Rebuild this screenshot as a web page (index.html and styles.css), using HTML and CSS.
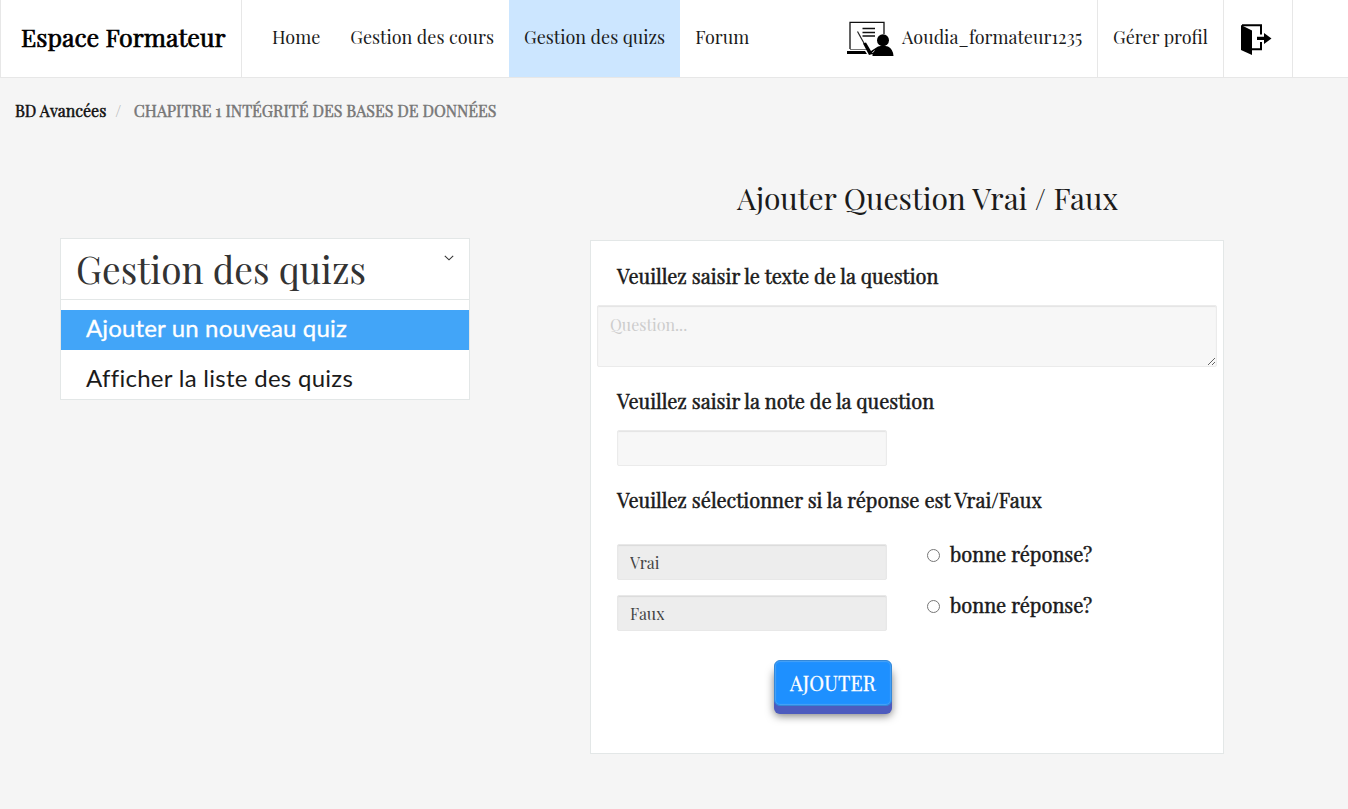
FILE: index.html
```html
<!DOCTYPE html>
<html lang="fr">
<head>
<meta charset="utf-8">
<title>Espace Formateur</title>
<link rel="stylesheet" href="styles.css">
</head>
<body>
<header class="navbar">
  <a class="brand">Espace Formateur</a>
  <nav class="links">
    <a class="link">Home</a>
    <a class="link">Gestion des cours</a>
    <a class="link active">Gestion des quizs</a>
    <a class="link">Forum</a>
  </nav>
  <div class="account">
    <a class="user">
      <svg class="teacher" width="48" height="37" viewBox="0 0 48 37">
        <path d="M3 28V1.300H37V13" fill="none" stroke="#111" stroke-width="1.3"/>
        <path d="M3 28.500H23" stroke="#777" stroke-width="1"/>
        <path d="M0 30H18L20 33H0Z"/>
        <path d="M15.500 7.500H28M15.500 11.500H28M15.500 15H28" stroke="#111" stroke-width="1.300"/>
        <path d="M10.500 10.500L18 24" stroke="#222" stroke-width="1.2"/>
        <path d="M16 22.500L19 21.500L24 30L31 25.500Q36 24 41 25.500Q46 28 46.500 35H25.500V33L22 34Z"/>
        <path d="M25.300 32L27.500 29.500" stroke="#fff" stroke-width=".8"/>
        <circle cx="36" cy="19.300" r="6"/>
      </svg>
      <span class="username">Aoudia_formateur1235</span>
    </a>
    <a class="profile">Gérer profil</a>
    <a class="logout">
      <svg width="32" height="32" viewBox="0 0 32 32">
        <path d="M1 1L12 6.500V31L1 26Z"/>
        <path d="M2 1.300H21V10.500M12 25.200H21V18" fill="none" stroke="#000" stroke-width="2"/>
        <path d="M17 12.700H24V9L31.500 14.500L24 20V16H17Z"/>
      </svg>
    </a>
  </div>
</header>
<div class="breadcrumb">
  <span class="course">BD Avancées</span><span class="slash">/</span><span class="chapter">CHAPITRE 1 INTÉGRITÉ DES BASES DE DONNÉES</span>
</div>
<main class="content">
  <aside class="sidebar">
    <div class="side-head">
      <h2 class="side-title">Gestion des quizs</h2>
      <svg class="chevron" width="10" height="6" viewBox="0 0 10 6"><path d="M.8 .8L5 4.800L9.200 .8" fill="none" stroke="#333" stroke-width="1.100"/></svg>
    </div>
    <a class="side-item selected">Ajouter un nouveau quiz</a>
    <a class="side-item">Afficher la liste des quizs</a>
  </aside>
  <section class="main">
    <h1 class="title">Ajouter Question Vrai / Faux</h1>
    <form class="panel">
      <label class="label">Veuillez saisir le texte de la question</label>
      <textarea class="field question" placeholder="Question..."></textarea>
      <label class="label note-label">Veuillez saisir la note de la question</label>
      <input class="field short" type="text">
      <label class="label answer-label">Veuillez sélectionner si la réponse est Vrai/Faux</label>
      <div class="answer">
        <input class="field short readonly" type="text" value="Vrai" readonly>
        <label class="choice"><input class="radio" type="radio" name="answer">bonne réponse?</label>
      </div>
      <div class="answer">
        <input class="field short readonly" type="text" value="Faux" readonly>
        <label class="choice"><input class="radio" type="radio" name="answer">bonne réponse?</label>
      </div>
      <button class="submit" type="button">AJOUTER</button>
    </form>
  </section>
</main>
</body>
</html>
```
FILE: styles.css
```css
* { box-sizing: border-box; }
body {
  margin: 0;
  min-height: 809px;
  background: #f5f5f5;
  color: #1b1b1b;
  font-family: "Playfair Display", "Liberation Serif", serif;
}
.navbar {
  display: flex;
  height: 78px;
  background: #fff;
  border-bottom: 1px solid #e7e7e7;
  border-left: 1px solid #e7e7e7;
  font-size: 18px;
  line-height: 74px;
  white-space: nowrap;
}
.brand {
  width: 241px;
  padding-left: 20px;
  border-right: 1px solid #e7e7e7;
  color: #000;
  font-size: 25px;
  -webkit-text-stroke: .7px #000;
}
.links { display: flex; padding-left: 15px; }
.link { padding: 0 15px; }
.active { background: #cce6ff; }
.account { display: flex; margin-left: auto; margin-right: 55px; border-right: 1px solid #e7e7e7; }
.user { display: flex; width: 251px; border-right: 1px solid #e7e7e7; }
.teacher { margin: 21px 7px 0 0; }
.profile { width: 126px; padding-left: 15px; border-right: 1px solid #e7e7e7; }
.logout { width: 68px; padding: 24px 0 0 16px; line-height: 0; }
.breadcrumb {
  display: flex;
  height: 66px;
  padding: 0 15px;
  font-size: 16px;
  line-height: 66px;
}
.course { color: #111; -webkit-text-stroke: .5px #111; }
.slash { width: 27.5px; padding-left: 9px; color: #aaa; }
.chapter { color: #777; -webkit-text-stroke: .5px #777; }
.content { display: flex; align-items: flex-start; padding-left: 60px; }
.sidebar {
  width: 410px;
  height: 162px;
  margin-top: 94px;
  background: #fff;
  border: 1px solid #e3e7e7;
}
.side-head {
  display: flex;
  justify-content: space-between;
  height: 61px;
  margin-bottom: 10px;
  padding: 0 15px;
  border-bottom: 1px solid #e3e7e7;
}
.side-title { margin: 0; color: #333; font-size: 37px; font-weight: 400; line-height: 59px; }
.chevron { margin-top: 16px; }
.side-item {
  display: block;
  height: 40px;
  margin-bottom: 10px;
  padding-left: 25px;
  color: #1b1b1b;
  font: 24px/35px Lato, "Noto Sans", sans-serif;
  font-variant-ligatures: none;
  letter-spacing: .28px;
}
.selected { background: #42a5f8; color: #fff; letter-spacing: .15px; -webkit-text-stroke: .3px #fff; }
.main { width: 634px; margin-left: 120px; }
.title {
  height: 96px;
  margin: 0;
  padding: 32px 0 0 147px;
  font-size: 30px;
  font-weight: 400;
  line-height: 45px;
}
.panel {
  display: flex;
  flex-direction: column;
  align-items: flex-start;
  height: 514px;
  padding: 21px 6px 0;
  background: #fff;
  border: 1px solid #e3e7e7;
}
.label, .choice {
  padding-left: 20px;
  font-size: 20px;
  -webkit-text-stroke: .5px #1b1b1b;
}
.label { height: 30px; line-height: 28px; }
.field {
  height: 36px;
  padding: 0 12px;
  background: #f7f7f7;
  border: 1px solid #ebebeb;
  border-radius: 2px;
  box-shadow: inset 0 1px 1px rgba(0, 0, 0, .08);
  color: #444;
  font: 16px/24px "Playfair Display", "Liberation Serif", serif;
  outline: none;
}
.question { width: 620px; height: 62px; margin-top: 13px; padding-top: 7px; }
.question::placeholder { color: #ccc; }
.note-label { margin-top: 20px; }
.short { width: 270px; margin-left: 20px; }
.note-label + .short { margin-top: 13px; }
.answer-label { margin: 20px 0 28px; }
.answer { display: flex; align-items: flex-start; height: 51px; }
.readonly { background: #ededed; border-color: #e8e8e8; }
.choice { display: flex; padding-left: 40px; line-height: 20px; }
.radio { width: 13px; height: 13px; margin: 5px 10px 0 0; }
.submit {
  width: 118px;
  height: 46px;
  margin: 14px 0 0 177px;
  padding: 0;
  background: #1e90ff;
  border: 1px solid #3488d8;
  border-radius: 6px;
  box-shadow: inset 0 0 1px 1px #48a2f7, 0 8px 0 #4d5bbe, 0 10px 8px rgba(0, 0, 0, .5);
  color: #fff;
  font: 20px/40px "Playfair Display", "Liberation Serif", serif;
  letter-spacing: .15px;
  -webkit-text-stroke: .3px #fff;
}
```
